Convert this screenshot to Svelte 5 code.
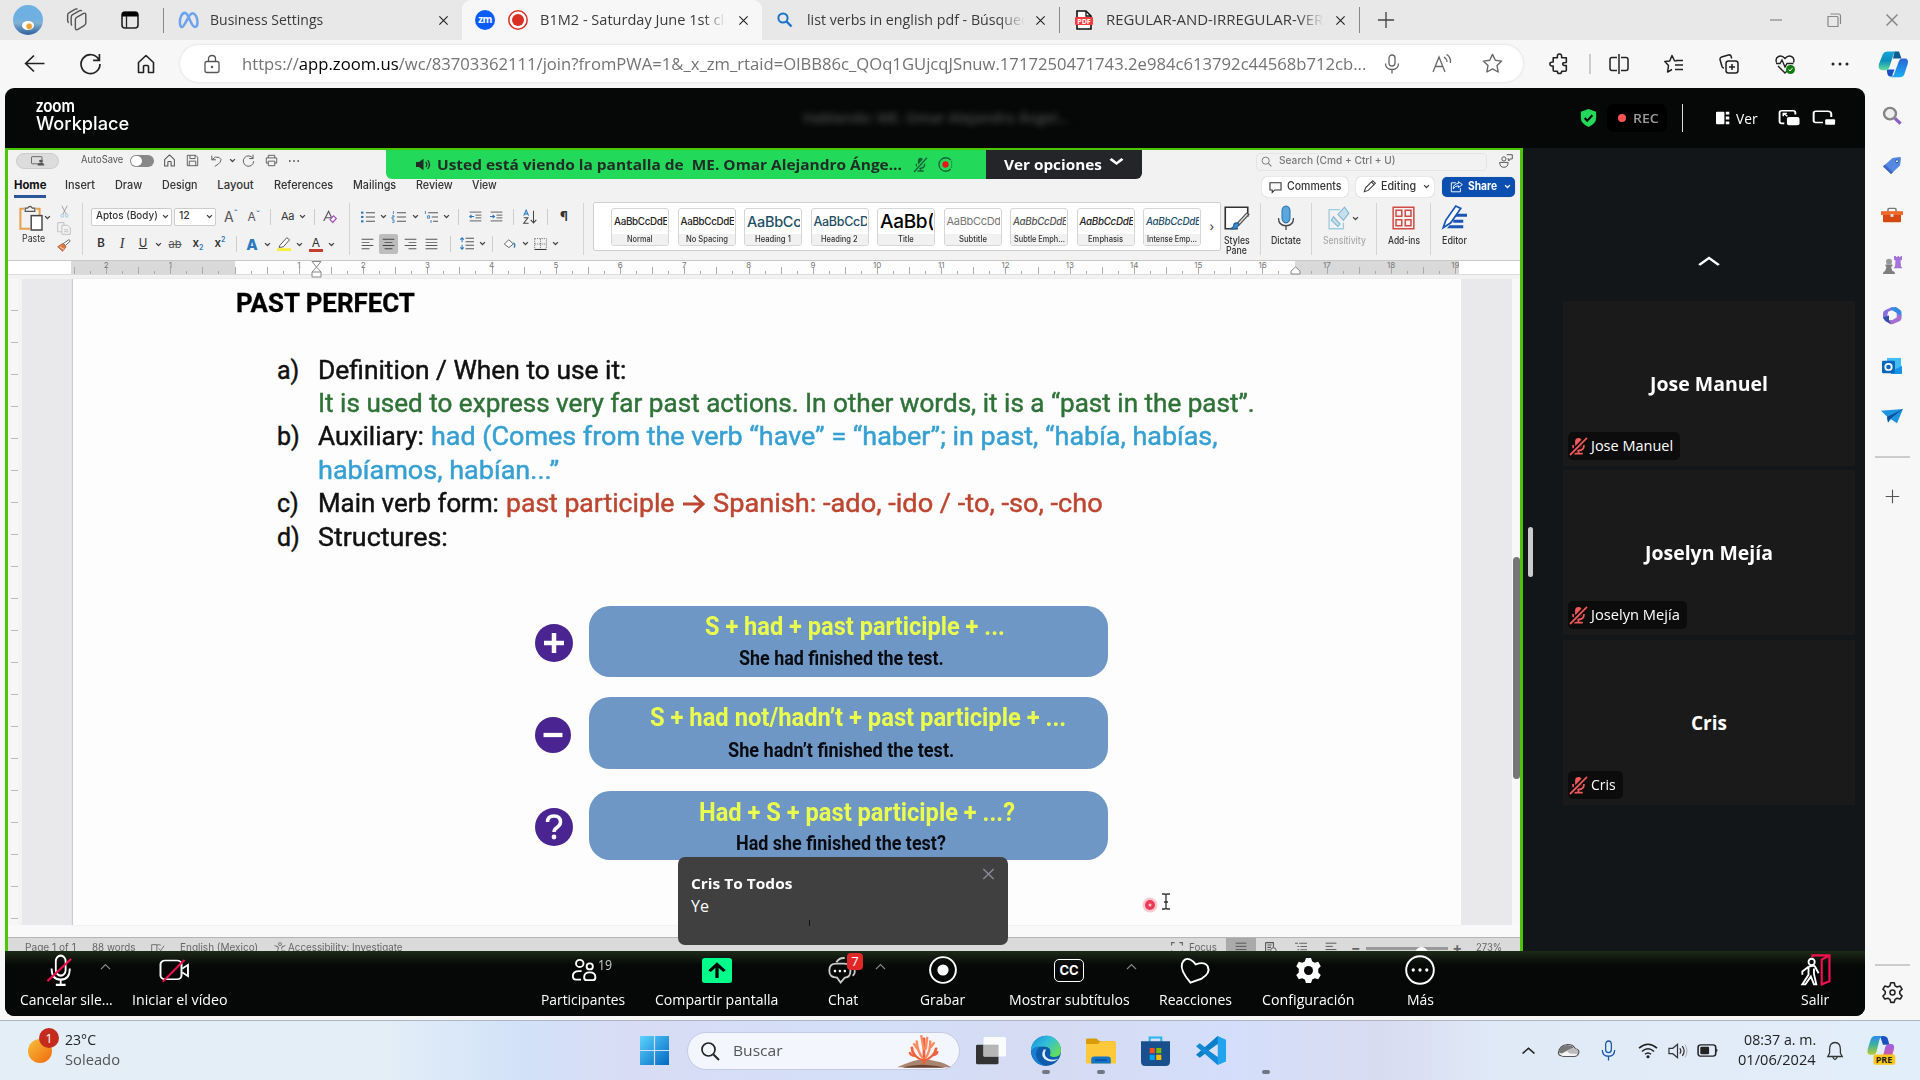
<script>
  // Condenses or expands a label horizontally so that it fills a given width.
  function fit(node, width) {
    const apply = () => {
      const natural = node.offsetWidth;
      if (!natural) return;
      node.style.transform = `scaleX(${width / natural})`;
      node.style.marginRight = `${width - natural}px`;
    };
    apply();
    requestAnimationFrame(apply);
    document.fonts.ready.then(apply);
  }

  const icons = {
    workspaces: '<g fill="none" stroke="#555" stroke-width="1.3" stroke-linejoin="round"><path d="M8.500 9.500q0-1.500 1.500-2.200l6-3.300q2-.8 2 1.200v7.300q0 1.500-1.200 2.300l-6 3.700q-2.300 1-2.300-1.200zM5.500 15q-.8-.5-.8-2V7.500Q4.700 6 6 5.200l6.500-3.700q1-.5 2 .2M2.500 12.500Q1.500 12 1.500 10.500V5.500Q1.500 4 3 3.200L8.500.200q1-.5 2 0"/></g>',
    tabs: '<rect x="2" y="2" width="16" height="16" rx="3" fill="none" stroke="#222" stroke-width="1.6"/><path d="M2 6V4q0-2 2-2h12q2 0 2 2v2.500H2z" fill="#000"/><path d="M6.500 6v12" stroke="#222" stroke-width="1.300"/>',
    meta: '<path d="M2 14C1 9 4 2 7.500 3 11 4 13 17 17 17c3 0 3-6 1.500-10S14 2 11.500 5.500 6 17 4 17q-1.600 0-2-3z" fill="none" stroke="#6ba3ee" stroke-width="2.500"/>',
    x: '<path d="M4.500 4.500l11 11M15.500 4.500l-11 11" stroke="currentColor" stroke-width="1.500" fill="none"/>',
    zm: '<circle cx="10" cy="10" r="10" fill="#0b5cff"/>',
    rec: '<circle cx="10" cy="10" r="9.200" fill="#fff" stroke="#d93025" stroke-width="1.500"/><circle cx="10" cy="10" r="6" fill="#d93025"/>',
    bing: '<circle cx="8" cy="8" r="4.600" fill="none" stroke="#1a73c8" stroke-width="2"/><path d="M11.500 11.500l5 5" stroke="#1a73c8" stroke-width="2.400"/>',
    pdf: '<path d="M3 1h9l5 5v13H3z" fill="#fff" stroke="#111" stroke-width="1.600"/><path d="M12 1v5h5" fill="none" stroke="#111" stroke-width="1.300"/><rect x="1" y="7" width="18" height="8" rx="1" fill="#f53b3b"/>',
    plus: '<path d="M10 1v18M1 10h18" stroke="currentColor" stroke-width="1.500"/>',
    min: '<path d="M4 10h12" stroke="#888" stroke-width="1.200"/>',
    restore: '<path d="M4 6.500h9q1 0 1 1v9H5q-1 0-1-1z" fill="none" stroke="#888" stroke-width="1.200"/><path d="M6.500 4h8q2 0 2 2v8" fill="none" stroke="#888" stroke-width="1.200"/>',
    back: '<path d="M19.500 10H1.500M9.500 1.500L1.500 10l8 8.500" fill="none" stroke="#222" stroke-width="1.600"/>',
    reload: '<path d="M18 6.500A9 9 0 1 0 19 10.500M18.500 1v6h-6" fill="none" stroke="#222" stroke-width="1.600"/>',
    home: '<path d="M2.500 8.500L10 1.500l7.500 7V18.500h-5v-6q0-1-1-1h-3q-1 0-1 1v6h-5z" fill="none" stroke="currentColor" stroke-width="1.600" stroke-linejoin="round"/>',
    lock: '<rect x="3" y="7.500" width="14" height="11" rx="2" fill="none" stroke="#555" stroke-width="1.300"/><path d="M6.500 7.500V5q0-3.500 3.500-3.500T13.500 5v2.500" fill="none" stroke="#555" stroke-width="1.300"/><circle cx="10" cy="13" r="1.200" fill="#555"/>',
    mic: '<rect x="7" y="1" width="6" height="11" rx="3" fill="none" stroke="currentColor" stroke-width="1.300"/><path d="M3.500 9.500q0 6 6.500 6t6.500-6M10 15.500v4" fill="none" stroke="currentColor" stroke-width="1.300"/>',
    read: '<path d="M1 18L7 3l6 15M3.300 12.500h7.400" fill="none" stroke="#666" stroke-width="1.300"/><path d="M12 3q3 2 3 5M14.500.500Q19 3 18.500 9" fill="none" stroke="#666" stroke-width="1.300"/>',
    star: '<path d="M10 1.300l2.700 5.600 6 .8-4.400 4.300 1.100 6.100L10 15.200 4.600 18.100l1.100-6.100L1.300 7.700l6-.8z" fill="none" stroke="#666" stroke-width="1.300" stroke-linejoin="round"/>',
    puzzle: '<path d="M4 4.500h4q-.5-3.500 2-3.500t2 3.500h4.500V9Q13 8.800 13 10.500T16.500 12v4.500q0 .8-1 .8h-3.500q.4 2.200-2 2.200t-2-2.200H5q-1 0-1-1V12.500Q.8 12.500.8 10.500T4 8.500z" fill="none" stroke="#222" stroke-width="1.500" stroke-linejoin="round"/>',
    split: '<path d="M8 3.500H3Q1 3.500 1 5.500v9q0 2 2 2h5M12 3.500h5q2 0 2 2v9q0 2-2 2h-5M10 0v20" fill="none" stroke="#222" stroke-width="1.500"/>',
    fav: '<path d="M12.500 7l-2-.2L8 1.500 5.700 7 .8 7.500l3.700 4L3.600 18 8 15.500M12 6.500h7M11 11h8M11 15.500h8" fill="none" stroke="#222" stroke-width="1.500" stroke-linejoin="round"/>',
    collect: '<rect x="7" y="7" width="12" height="12" rx="2.500" fill="none" stroke="#222" stroke-width="1.500"/><path d="M13 10v6M10 13h6M5 14q-1.500 0-2-1.500L1 5.500Q.8 3.500 2.500 3l7-2q2-.5 2.500 1l.7 2.500" fill="none" stroke="#222" stroke-width="1.500"/>',
    heart: '<path d="M1.500 8.500Q0 4 3.500 2.500 7 1 10 4.500 13 1 16.500 2.500 20 4 18.500 8.500M3 12l7 7 2-2M1 9.500h4l2-3.500 3 7 2-3.500h6.500" fill="none" stroke="#222" stroke-width="1.400"/><circle cx="15.500" cy="15.500" r="4.500" fill="#107c10"/><path d="M13.500 15.500l1.500 1.500 2.500-3" fill="none" stroke="#fff"/>',
    dots: '<g fill="currentColor"><circle cx="3" cy="10" r="1.500"/><circle cx="10" cy="10" r="1.500"/><circle cx="17" cy="10" r="1.500"/></g>',
    copilot: '<defs><linearGradient id="cg1" x2="0" y2="1"><stop stop-color="#16a5d6"/><stop offset=".5" stop-color="#0d8fbf"/><stop offset="1" stop-color="#62dd9a"/></linearGradient><linearGradient id="cg2" x2="0" y2="1"><stop stop-color="#2a63d4"/><stop offset="1" stop-color="#18aef5"/></linearGradient></defs><path d="M9 19q-2.300 0-2.800-2.300L5.800 14H11l-1.500 4q1 1-.5 1z" fill="#1750c4"/><path d="M14 1l1.700 5H10L11 1z" fill="#0c5d92"/><path d="M6 1h7q-2 0-2.600 2L7.700 12q-.7 2.400-3 2.400H3Q-.3 14.400.6 10L3.200 3Q4 1 6 1z" fill="url(#cg1)"/><path d="M14.500 19.500H8q2 0 2.600-2l3-8.500q.7-3 3-3h1.200q2.900 0 2 4l-2.300 7.500q-.8 2-3 2z" fill="url(#cg2)"/>',
    magnify: '<circle cx="8" cy="8" r="6" fill="#eee" stroke="#858585" stroke-width="2.400"/><path d="M13 13l5.500 5.500" stroke="#8a5ccc" stroke-width="3.200"/>',
    tag: '<path d="M10.500 2l7-1q2 0 1.500 2L18 10 9 19 1 11z" fill="#5488e2"/><path d="M1 11l8 8 2-2-8-8z" fill="#3d69c4"/><circle cx="15" cy="5.500" r="1.500" fill="#fff" stroke="#284b94"/>',
    toolbox: '<path d="M6 6V3.500Q6 2.500 7 2.500h6q1 0 1 1V6" fill="none" stroke="#777" stroke-width="1.500"/><rect x="1" y="6" width="18" height="11" rx="1" fill="#d5480f"/><path d="M-1 5.500h22v4H-1z" fill="#ef6a2a"/><rect x="8.500" y="8.500" width="3" height="3" fill="#ddd"/>',
    chess: '<circle cx="7" cy="6" r="3" fill="#999"/><path d="M3.500 9h7v1.500l-1.500 1L10.500 16h1q1.500 0 1.500 3H1q0-3 2-3l1.500-4.500-1-1z" fill="#7e7e7e"/><path d="M12 0h2v1h1.500V0h1.500v1h1.500V0H20v4l-1.500 1 .5 6 1 1v1h-8v-1l1-1 .5-6L12 4z" fill="#a372dc"/>',
    m365: '<path d="M10 1l-7 3.500Q1 5.500 1 8v5l4.500 2V8L14 3.500z" fill="#8670de"/><path d="M9 1.500L14 1l4 3q1.500 1 1.500 3v4L14 8 9 5.500z" fill="#3689e3"/><path d="M19.500 10v3q0 2-2 3L11 19q-1.500.5-3 0l-5-3.500 4.500-.5L14.500 12V8z" fill="#a56fd2"/><path d="M6 6l4-1.500L14.500 7v5L10 15 6 13z" fill="#f7f7f7"/><path d="M1 12l6-2v5l2 4-6-3.500z" fill="#304fa8"/>',
    outlook: '<rect x="5" y="1" width="14" height="12" fill="#40bdf2"/><path d="M19 10L9 15v3h10q1 0 1-1V9z" fill="#1692e3"/><rect x="0" y="4" width="13" height="13" rx="1" fill="#0867bd"/><circle cx="6.500" cy="10.500" r="3.200" fill="none" stroke="#fff" stroke-width="1.800"/>',
    plane: '<path d="M-1 4l22-2-6 15-6-4-3 3-1-6z" fill="#1c94e0"/><path d="M21 2L5 10.500l1 6 2-4z" fill="#0c4f9f"/>',
    cog: '<path d="M8.500 1.500h3l.7 2.700 1.800 1 2.700-.8 1.600 2.700-2 2v2l2 2-1.600 2.600-2.700-.7-1.800 1-.7 2.600h-3l-.7-2.600-1.800-1-2.700.7-1.600-2.600 2-2v-2l-2-2 1.600-2.700 2.700.8 1.800-1z" fill="none" stroke="#222" stroke-width="1.400" stroke-linejoin="round"/><circle cx="10" cy="10" r="2.200" fill="none" stroke="#222" stroke-width="1.300"/>',
    shield: '<path d="M10 0l9 3v7q0 6-9 10Q1 16 1 10V3z" fill="#23d959"/><path d="M5.500 10l3 3 6-6" fill="none" stroke="#000" stroke-width="2.400"/>',
    ver: '<rect x="0" y="1" width="12" height="18" rx="1.500" fill="#fff"/><path d="M14 1h5v4h-5zM14 8h5v4h-5zM14 15h5v4h-5z" fill="#fff"/>',
    pip1: '<path d="M6 16H3.500Q1.500 16 1.500 14V4q0-2 2-2h11q2 0 2 2v2" fill="none" stroke="#fff" stroke-width="1.800"/><rect x="8.500" y="9" width="12" height="9" rx="2" fill="#fff"/><path d="M9 8L5 4.800M5 8V4.800h3.500" fill="none" stroke="#fff" stroke-width="1.400"/>',
    pip2: '<path d="M10 15H3.500Q1.500 15 1.500 13V4.500q0-2 2-2h11q3 0 3 3V9" fill="none" stroke="#fff" stroke-width="1.800"/><rect x="12" y="11.500" width="9" height="6" rx="1" fill="#fff"/>',
    up: '<path d="M3 14l7-7 7 7" fill="none" stroke="currentColor" stroke-width="2"/>',
    down: '<path d="M3 6l7 7 7-7" fill="none" stroke="currentColor" stroke-width="3.500"/>',
    speaker: '<path d="M0 6h4l6-5v18l-6-5H0z" fill="#222b26"/><path d="M13 6q3 4 0 8M15.500 3q5 7 0 14" fill="none" stroke="#222b26" stroke-width="1.600"/>',
    micOff: '<rect x="6" y="1" width="8" height="11" rx="4" fill="currentColor"/><path d="M3.500 9q0 6 6.500 6t6.500-6M10 15v3M5 18.500h10" fill="none" stroke="currentColor" stroke-width="2"/><path d="M1 19L19 1" stroke="var(--cut)" stroke-width="5"/><path d="M0 20L20 1" stroke="currentColor" stroke-width="2"/>',
    recDot: '<path d="M17 4A9 9 0 1 0 17 16" fill="none" stroke="#16613a" stroke-width="1.700"/><path d="M18.200 5.500v9" stroke="#16613a" stroke-width="1.200" stroke-dasharray="2 1.500"/><circle cx="10" cy="10" r="4.200" fill="#ee1212"/>',
    present: '<rect x="2" y="3" width="14" height="13" rx="1" fill="none" stroke="#555" stroke-width="1.300"/><circle cx="14.500" cy="11" r="2.500" fill="#555"/><path d="M10 19q0-5 4.500-5t4.500 5z" fill="#555"/>',
    save: '<path d="M2 2h13l3 3v13H2zM6 2v5h8V2M5 18v-7h10v7" fill="none" stroke="#555" stroke-width="1.400"/>',
    undo: '<path d="M3 1v7h7M3 8Q9 1 15 4t2 8q-2 3-9 7" fill="none" stroke="#555" stroke-width="1.500"/>',
    redo: '<path d="M17 1v6h-6M17 7A8 8 0 1 0 18 11" fill="none" stroke="#555" stroke-width="1.400"/>',
    print: '<path d="M5 6V2h10v4M5 14H2V6h16v8h-3M5 11h10v7H5z" fill="none" stroke="#555" stroke-width="1.400"/>',
    search: '<circle cx="8.500" cy="8.500" r="6.500" fill="none" stroke="currentColor" stroke-width="1.700"/><path d="M13.500 13.500L19 19" stroke="currentColor" stroke-width="2"/>',
    people: '<circle cx="7" cy="7" r="3" fill="none" stroke="#555" stroke-width="1.400"/><path d="M1 12h12q0 7-6 7t-6-7zM11 1h8v6h-3l-2 3V7h-2" fill="none" stroke="#555" stroke-width="1.400"/>',
    comment: '<path d="M1.500 3h17v12H9l-4 4v-4H1.500z" fill="none" stroke="#333" stroke-width="1.700"/>',
    pencil: '<path d="M2 18l2-6L15 1l4 4L8 16z M13 3l4 4" fill="none" stroke="#333" stroke-width="1.600"/>',
    share: '<path d="M9 3H2v15h14v-6M13 1l6 5-6 5V8Q8 8 5 13q0-8 8-9z" fill="none" stroke="#fff" stroke-width="1.500"/>',
    paste: '<path d="M15 3h3v5M5 3H2v16h8" fill="none" stroke="#e8a04c" stroke-width="1.700"/><path d="M6 4V2.500h2q2-3 4 0h2V5H6z" fill="#f2f2f2" stroke="#555"/><rect x="11" y="8.500" width="9" height="11.500" fill="#fff" stroke="#444" stroke-width="1.200"/>',
    cut: '<path d="M5 1l8 13M15 1L7 14" stroke="#888" stroke-width="1.200"/><circle cx="6" cy="16.500" r="2.500" fill="none" stroke="#8fc1dc" stroke-width="1.300"/><circle cx="14" cy="16.500" r="2.500" fill="none" stroke="#8fc1dc" stroke-width="1.300"/>',
    copy: '<path d="M7 15H1V1h9v4M7 5h8l4 4v10H7zM10 12h6M10 15h6" fill="none" stroke="#bbb" stroke-width="1.300"/>',
    brush: '<path d="M17 1l2 2-7 7-3-3z" fill="#fff" stroke="#555" stroke-width="1.300"/><path d="M8 7l5 5-5 7-7-7z" fill="#e07b45" stroke="#a65129"/><path d="M4 12l6 4" stroke="#fff"/>',
    eraser: '<path d="M1 17L8 2l6 14M3.500 12h8" fill="none" stroke="#555" stroke-width="1.700"/><path d="M10 15l5-6 4 4-5 6z" fill="#fff" stroke="#a04eb5" stroke-width="1.800"/>',
    bullets: '<g fill="#2a79bd"><rect x="0" y="1" width="3.500" height="3.500"/><rect x="0" y="8.200" width="3.500" height="3.500"/><rect x="0" y="15.500" width="3.500" height="3.500"/></g><path d="M7 3h13M7 10h13M7 17h13" stroke="#555" stroke-width="1.500"/>',
    numbers: '<path d="M2 0v5M0 8h3v2H0v3h3M0 15h3v4H0" fill="none" stroke="#2a79bd" stroke-width="1.200"/><path d="M7 3h13M7 10h13M7 17h13" stroke="#555" stroke-width="1.500"/>',
    levels: '<path d="M2 0v5M5 8h3v4H5zM10 15v5" fill="none" stroke="#2a79bd" stroke-width="1.300"/><path d="M6 3h14M11 10h9M13 17h7" stroke="#555" stroke-width="1.500"/>',
    outdent: '<path d="M1 2h18M10 7.500h9M10 12.500h9M1 18h18" stroke="#555" stroke-width="1.500"/><path d="M8 10H1M4 7l-3 3 3 3" fill="none" stroke="#2a79bd" stroke-width="1.700"/>',
    indent: '<path d="M1 2h18M10 7.500h9M10 12.500h9M1 18h18" stroke="#555" stroke-width="1.500"/><path d="M0 10h7M4 7l3 3-3 3" fill="none" stroke="#2a79bd" stroke-width="1.700"/>',
    sort: '<path d="M1 8l3.500-8L8 8M2 5.500h5" fill="none" stroke="#2a79bd" stroke-width="1.500"/><path d="M1 11h6l-6 8h7M15 1v17M11 14l4 4.500 4-4.500" fill="none" stroke="#444" stroke-width="1.500"/>',
    left: '<path d="M1 2h18M1 7.300h12M1 12.600h18M1 18h12" stroke="#555" stroke-width="1.600"/>',
    center: '<path d="M1 2h18M4 7.300h12M1 12.600h18M4 18h12" stroke="#444" stroke-width="1.600"/>',
    right: '<path d="M1 2h18M7 7.300h12M1 12.600h18M7 18h12" stroke="#555" stroke-width="1.600"/>',
    just: '<path d="M1 2h18M1 7.300h18M1 12.600h18M1 18h18" stroke="#555" stroke-width="1.600"/>',
    web: '<path d="M1 1h13v8M1 1v17h8M4 5h7M4 9h6M4 13h4" fill="none" stroke="#555" stroke-width="1.800"/><circle cx="14" cy="14" r="4.500" fill="none" stroke="#555" stroke-width="1.600"/>',
    outl: '<path d="M0 2h5M7 2h13M4 7.500h3M9 7.500h11M4 13h3M9 13h11M7 18h13" stroke="#666" stroke-width="1.800"/>',
    spacing: '<path d="M8 2h12M8 7.300h12M8 12.600h12M8 18h12" stroke="#555" stroke-width="1.500"/><path d="M3 1v7M3 12v7M.5 4L3 1l2.500 3M.5 16L3 19l2.500-3" fill="none" stroke="#2a79bd" stroke-width="1.500"/>',
    bucket: '<path d="M9 3l7 7-7 6-7-6z" fill="#fff" stroke="#555" stroke-width="1.400"/><path d="M16 8q4 3 1 8" stroke="#2a79bd" stroke-width="2" fill="none"/>',
    borders: '<path d="M1 1h18v18H1zM10 1v18M1 10h18" fill="none" stroke="#666" stroke-width="1.300" stroke-dasharray="2 1.500"/><path d="M1 19h18" stroke="#333" stroke-width="1.600"/>',
    marker: '<path d="M4 12L14 1l4 3-9 10-6 1z" fill="#fff" stroke="#555" stroke-width="1.400"/><path d="M0 16h20v4H0z" fill="#f7ee35"/>',
    stylesPane: '<path d="M11 19H1V1h18v8" fill="#fff" stroke="#333" stroke-width="1.300"/><path d="M20 7l-8 9-2-1 8-9z" fill="#ddd" stroke="#555"/><path d="M12 15q-1 5-7 4 3-1 3-4 2-2 4 0z" fill="#3e8bc9" stroke="#205f99"/>',
    dictate: '<rect x="6" y="0" width="8" height="14" rx="4" fill="#5aa7de" stroke="#2670ab"/><path d="M2.500 10q0 6.500 7.500 6.500t7.500-6.500M10 16.500V20" fill="none" stroke="#444" stroke-width="1.300"/>',
    sens: '<path d="M11 3H1v16h13v-5" fill="none" stroke="#9fcbe0" stroke-width="1.200"/><path d="M3 12l6 5 2-2-6-6zM9 7l5 5 5-6-4-5-3 3z" fill="#c5dfed" stroke="#84b9d4"/>',
    addins: '<path d="M1 1h18v18H1z M3.500 3.500h5v5h-5z M11.500 3.500h5v5h-5z M3.500 11.500h5v5h-5z M11.500 11.500h5v5h-5z" fill="none" stroke="#cf4a44" stroke-width="1.300"/>',
    editor: '<path d="M11 6.500h9V9h-9zM9 11.500h8V14H9zM6 16h11v2.500H4z" fill="#1a56b5"/><path d="M1 18l2-6L11 0l4 2-8 12z" fill="#fff" stroke="#1a56b5" stroke-width="1.400"/>',
    book: '<path d="M1 3h8v15H1zM9 4q4-2 6 0M9 18h6M12 10l3 4 5-9" fill="none" stroke="#666" stroke-width="1.500"/>',
    access: '<circle cx="10" cy="3.500" r="2.500" fill="none" stroke="#666" stroke-width="1.400"/><path d="M1 6l6 2v4L4 19M19 6l-6 2v4M12 15h7M12 19h7" fill="none" stroke="#666" stroke-width="1.600"/>',
    focus: '<path d="M1 6V1h5M14 1h5v5M1 14v5h5M14 19h5v-5" fill="none" stroke="#666" stroke-width="2"/>',
    zMic: '<rect x="7" y="1" width="7" height="12.500" rx="3.500" fill="none" stroke="#fff" stroke-width="1.300"/><path d="M4 9q0 7 6.500 7T17 9M10.500 16v3.300M7 19.300h7" fill="none" stroke="#fff" stroke-width="1.300"/><path d="M1 17L18 3" stroke="#f4104f" stroke-width="1.400"/>',
    zVid: '<rect x="1" y="2" width="14" height="15" rx="3" fill="none" stroke="#fff" stroke-width="1.300"/><path d="M15.500 8.500L19.300 5.500v9l-3.800-3" fill="none" stroke="#fff" stroke-width="1.300"/><path d="M2.500 19L17 1.500" stroke="#f4104f" stroke-width="1.500"/>',
    zPart: '<circle cx="7" cy="4.500" r="3" fill="none" stroke="#fff" stroke-width="1.500"/><circle cx="15" cy="7" r="2.500" fill="none" stroke="#fff" stroke-width="1.500"/><path d="M8 18H4q-2.500 0-2.500-3 0-4 5-4h2M15 12q4.500 0 4.500 4 0 2.500-2 2.500h-5q-2 0-2-2.500 0-4 4.500-4z" fill="none" stroke="#fff" stroke-width="1.500"/>',
    zShare: '<rect width="20" height="20" rx="2" fill="#00ff8a"/><path d="M10 16V6M5 10.500L10 5l5 5.500" fill="none" stroke="#000" stroke-width="2.200"/>',
    zChat: '<path d="M6 4.500Q8 1 12 1.500M19 10q.5 3-1.500 4" fill="none" stroke="#ccc" stroke-width="1.300"/><path d="M6 5.500h5.500q4.500 0 4.500 4.500v1q0 4-4 4.500l-3 3.500-2.500-3.500Q1 15 1 11v-1q0-4.500 5-4.500z" fill="none" stroke="#ccc" stroke-width="1.300"/><g fill="#fff"><circle cx="5" cy="10.800" r=".9"/><circle cx="8.500" cy="10.800" r=".9"/><circle cx="12" cy="10.800" r=".9"/></g>',
    zRec: '<circle cx="10" cy="10" r="9.200" fill="none" stroke="#fff" stroke-width="1.400"/><circle cx="10" cy="10" r="4" fill="#fff"/>',
    zHeart: '<path d="M7 19Q0 10 1.300 5 3 0 7 2q2 1 3.500 3.500 6-2.500 8 1.500 2 5-4 9z" fill="none" stroke="#fff" stroke-width="1.300"/>',
    zGear: '<path d="M8 0h4l1 2.800 2 1 2.800-.8 2 3.500-2 2v3l2 2-2 3.500-2.800-.8-2 1L12 20H8l-1-2.800-2-1-2.800.8-2-3.500 2-2v-3l-2-2L2.200 3 5 3.800l2-1z" fill="#fff"/><circle cx="10" cy="10" r="3.600" fill="#060808"/>',
    zMore: '<circle cx="10" cy="10" r="9.200" fill="none" stroke="#fff" stroke-width="1.300"/><g fill="#fff"><circle cx="5.500" cy="10" r="1.100"/><circle cx="10" cy="10" r="1.100"/><circle cx="14.500" cy="10" r="1.100"/></g>',
    zExit: '<path d="M8 2V.8h11V17l-5 2V3.500L19 1" fill="none" stroke="#f4104f" stroke-width="1.400"/><circle cx="7.500" cy="5" r="2" fill="none" stroke="#fff" stroke-width="1.200"/><path d="M5.500 8q4-1.500 4.500.5l2 3.500M5.500 8L1.500 11v2M5.500 8v5L1.500 19h2l3.500-5 2 5h1.500L9 12.500V9" fill="none" stroke="#fff" stroke-width="1.200"/>',
    start: '<defs><linearGradient id="wg" x2="1" y2="1"><stop stop-color="#5cd3ff"/><stop offset="1" stop-color="#0067c0"/></linearGradient></defs><path d="M0 0h9.600v9.600H0zM10.400 0H20v9.600h-9.600zM0 10.400h9.600V20H0zM10.400 10.400H20V20h-9.600z" fill="url(#wg)"/>',
    coral: '<path d="M0 19q3-2 6-3.500 4-1.500 8 0 4 1 6 3.500z" fill="#a98570"/><path d="M2 19.300q5-2 9-1.500t7 1.500z" fill="#6b4232"/><g fill="none" stroke-linecap="round"><path d="M10 17V3M10 15.500Q5.500 13 5.500 8M10 15.500q4-2.500 4.500-7M7 13Q5 12.500 4.800 11M13.300 12.500q1.400-.5 1.600-2" stroke="#f2603c" stroke-width="1"/><path d="M9.500 14Q7.500 10 7.300 4.500M10.500 14q2-4 1.800-9.500M9.900 9L9 1.500M10.600 9l.6-6.500M7.400 8.500L6.300 6M12.500 8l1.200-2.500" stroke="#ff8a5e" stroke-width=".9"/></g>',
    task: '<rect x="0" y="5.500" width="15" height="14" rx="1" fill="#333"/><rect x="5" y="0" width="15" height="14" rx="1" fill="#fff" opacity=".88"/><path d="M5 5.500h10V14H5z" fill="#b6b6b6"/>',
    edge: '<defs><linearGradient id="eg" x2="1" y2=".7"><stop stop-color="#178cd8"/><stop offset=".5" stop-color="#31bedb"/><stop offset="1" stop-color="#66dc5a"/></linearGradient></defs><circle cx="10" cy="10" r="10" fill="#0d5bab"/><path d="M0 10A10 10 0 0 1 20 9.500Q20 14 15.500 14q-4 0-2.500-2.500.5-4.500-4.500-4.500Q3 7 0 10z" fill="url(#eg)"/><path d="M0 10Q2 6.500 6 7q-4 3-2 8 2 4 6 5Q1 19 0 10z" fill="#1680d0"/><path d="M8.500 9q-3 5 2.500 7.500 4 1.500 7.500-1.500-6 2-8.500-1-1.500-2 0-5z" fill="#e5edfb"/>',
    folder: '<path d="M0 2q0-1 1-1h6l2 2h10v5H0z" fill="#d99b06"/><path d="M0 5h8l2-2h9q1 0 1 1v15H0z" fill="#fdc93b"/><path d="M3.500 19v-3q0-2 2-2h9q2 0 2 2v3z" fill="#1173c9"/><path d="M6 16.500h8" stroke="#0a4f92" stroke-width="1"/>',
    store: '<path d="M6 4V1h8v3" fill="none" stroke="#25b6ee" stroke-width="1.400"/><path d="M0 3.500h20V17q0 3-3 3H3q-3 0-3-3z" fill="#17508c"/><path d="M6 8h3.500v3.500H6z" fill="#f25022"/><path d="M10.500 8H14v3.500h-3.500z" fill="#7fba00"/><path d="M6 12.500h3.500V16H6z" fill="#00a4ef"/><path d="M10.500 12.500H14V16h-3.500z" fill="#ffb900"/>',
    code: '<path d="M14.500 0L20 2.500v15L14.500 20 4 10z" fill="#22a3ee"/><path d="M14.500 0v5.500L2.500 15 0 13z" fill="#0a7fc9"/><path d="M14.500 20v-5.500L2.500 5 0 7z" fill="#1489d6"/><path d="M14.500 5.500v9L8.500 10z" fill="#dbe0f5"/>',
    cloud: '<path d="M3 17q-3-1-2.500-5Q2 3 9 2q5-.5 7.500 5.500Q21 9 19.500 14q-1 4-4 4H6q-2 0-3-1z" fill="#f5f5f5" stroke="#555" stroke-width="1.200"/><path d="M1 13Q1.500 3 9 2.500q4 0 6 3.500L3.500 14z" fill="#777"/><path d="M15 6l-7 4 3 4 8 .5Q20 9 16.500 8z" fill="#bbb"/>',
    wifi: '<path d="M1 7.500q9-8 18 0M4 11q6-5.500 12 0M7 14q3-2.700 6 0" fill="none" stroke="#222" stroke-width="1.500"/><circle cx="10" cy="16.500" r="1.600" fill="#222"/>',
    vol: '<path d="M1 7h4l5-4.500v15L5 13H1z" fill="none" stroke="#333" stroke-width="1.300"/><path d="M12.500 7q2 3 0 6M15 4.500q4 5.500 0 11" fill="none" stroke="#333" stroke-width="1.300"/><path d="M18 3q4 7 0 14" fill="none" stroke="#aaa"/>',
    batt: '<rect x="1" y="4" width="16" height="12" rx="2.500" fill="none" stroke="#222" stroke-width="1.400"/><rect x="3" y="6" width="8" height="8" rx="1" fill="#222"/><path d="M17.500 8q2.500 2 0 4z" fill="#222"/>',
    bell: '<path d="M10 1.500q6 0 6 7v3.500l2 3.500H2L4 12V8.500q0-7 6-7zM7.500 16q2.500 5 5 0" fill="none" stroke="#333" stroke-width="1.400"/>',
    copilotPre: '<defs><linearGradient id="pg1" x2="0" y2="1"><stop stop-color="#2a8af0"/><stop offset=".45" stop-color="#3bb0a0"/><stop offset="1" stop-color="#b8cc2c"/></linearGradient><linearGradient id="pg2" x2="0" y2="1"><stop stop-color="#9a5fe6"/><stop offset="1" stop-color="#f55a7a"/></linearGradient></defs><path d="M11 0q3 0 3.500 2.500L15.500 6H11L9 0z" fill="#1b50c0"/><path d="M5.500 0H11Q9 .5 8.500 3L6.500 11q-.7 2-3 2H2.500Q-.3 13 .5 9L2.500 2.500Q3.500 0 5.500 0z" fill="url(#pg1)"/><path d="M13.500 18H8q2 0 2.500-2l2-8q.7-2.500 3-2.500h1q3 0 2 4l-2 6.500q-.8 2-3 2z" fill="url(#pg2)"/><rect x="4.500" y="12.800" width="15" height="7" rx="1.500" fill="#ffc61a"/>'
  };

  const tabs = [
    { id: 't1', icon: 'meta', text: 'Business Settings', w: 113 },
    { id: 't2', icon: 'zm', text: 'B1M2 - Saturday June 1st cla', w: 192, active: true },
    { id: 't3', icon: 'bing', text: 'list verbs in english pdf - Búsqued', w: 223 },
    { id: 't4', icon: 'pdf', text: 'REGULAR-AND-IRREGULAR-VERB', w: 227 }
  ];
  const wordTabs = [
    ['Home', 32], ['Insert', 30], ['Draw', 27], ['Design', 36], ['Layout', 36], ['References', 59], ['Mailings', 43], ['Review', 37], ['View', 25]
  ];
  const styles = [
    ['Normal', 25, 'AaBbCcDdE', 'n'], ['No Spacing', 42, 'AaBbCcDdE', 'n'], ['Heading 1', 36, 'AaBbCc', 's1'],
    ['Heading 2', 37, 'AaBbCcD', 's2'], ['Title', 16, 'AaBb(', 'tt'], ['Subtitle', 28, 'AaBbCcDd', 'st'],
    ['Subtle Emph...', 51, 'AaBbCcDdE', 'se'], ['Emphasis', 35, 'AaBbCcDdE', 'em'], ['Intense Emp...', 50, 'AaBbCcDdE', 'ie']
  ];
  const rulerNumbers = Array.from({ length: 22 }, (_, i) => Math.abs(i - 2) || '');
  const structures = [
    { sign: '+', rule: 'S + had + past participle + ...', rw: 300, shift: 'a', ex: 'She had finished the test.', ew: 205 },
    { sign: '−', rule: 'S + had not/hadn’t + past participle + ...', rw: 416, shift: 'b', ex: 'She hadn’t finished the test.', ew: 226 },
    { sign: '?', rule: 'Had + S + past participle + ...?', rw: 316, shift: 'c', ex: 'Had she finished the test?', ew: 210 }
  ];
  const people = [
    { name: 'Jose Manuel', big: 118, small: 82 },
    { name: 'Joselyn Mejía', big: 128, small: 89 },
    { name: 'Cris', big: 36, small: 25 }
  ];
  const sidebar = ['magnify', 'tag', 'toolbox', 'chess', 'm365', 'outlook', 'plane'];
</script>

{#snippet ic(name, w = 20, h = w)}
  <svg class="ic" width={w} height={h} viewBox="0 0 20 20" preserveAspectRatio="none">{@html icons[name]}</svg>
{/snippet}

{#snippet t(text, w)}<span class="fit" use:fit={w}>{text}</span>{/snippet}

{#snippet chev()}<span class="chev">{@render ic('down', 7)}</span>{/snippet}

<div class="screen">
  <header class="tabstrip">
    <span class="avatar"><i></i></span>
    <span class="cell">{@render ic('workspaces', 22)}</span>
    <span class="cell">{@render ic('tabs', 20)}</span>
    <span class="bar"></span>
    {#each tabs as tab (tab.id)}
      <div class="tab {tab.id}" class:active={tab.active}>
        <span class="fav">{@render ic(tab.icon, 20)}{#if tab.icon === 'zm'}<b>zm</b>{/if}{#if tab.icon === 'pdf'}<b class="p">PDF</b>{/if}</span>
        {#if tab.active}<span class="recicon">{@render ic('rec', 20)}</span>{/if}
        <span class="ttl" class:fade={tab.id !== 't1'}>{@render t(tab.text, tab.w)}</span>
        <span class="cls">{@render ic('x', 15)}</span>
      </div>
    {/each}
    <span class="newtab">{@render ic('plus', 18)}</span>
    <div class="winctl">{@render ic('min', 20)}{@render ic('restore', 20)}<span class="wx">{@render ic('x', 20)}</span></div>
  </header>

  <div class="toolbar">
    <span class="cell">{@render ic('back', 21, 19)}</span>
    <span class="cell">{@render ic('reload', 21)}</span>
    <span class="cell dark">{@render ic('home', 20)}</span>
    <div class="address">
      {@render ic('lock', 20)}
      <span class="url fit" use:fit={1124}>https://<b>app.zoom.us</b>/wc/83703362111/join?fromPWA=1&_x_zm_rtaid=OlBB86c_QOq1GUjcqJSnuw.1717250471743.2e984c613792c44568b712cb...</span>
      <span class="aicons"><span>{@render ic('mic', 20)}</span><span>{@render ic('read', 20)}</span><span>{@render ic('star', 21)}</span></span>
    </div>
    <span class="cell c1">{@render ic('puzzle', 21)}</span>
    <span class="vb"></span>
    <div class="right">
      {#each ['split', 'fav', 'collect', 'heart', 'dots'] as n}<span class="cell">{@render ic(n, 20)}</span>{/each}
    </div>
    <span class="cop">{@render ic('copilot', 30, 28)}</span>
  </div>

  <div class="body">
    <div class="zoom">
      <div class="zhead">
        <div class="logo"><span class="z1">{@render t('zoom', 39)}</span><span class="z2">{@render t('Workplace', 93)}</span></div>
        <div class="ghost">{@render t('Hablando: ME. Omar Alejandro Ángel...', 266)}</div>
        <div class="zright">
          <span class="sh">{@render ic('shield', 17, 18)}</span>
          <span class="recpill"><i></i>{@render t('REC', 26)}</span>
          <span class="zbar"></span>
          <span class="ver">{@render ic('ver', 14, 14)}{@render t('Ver', 22)}</span>
          {@render ic('pip1', 21, 18)}
          {@render ic('pip2', 22, 18)}
        </div>
      </div>

      <div class="zmain">
        <div class="share">
          <div class="banner">
            <div class="ban1">{@render ic('speaker', 15, 13)}{@render t('Usted está viendo la pantalla de  ME. Omar Alejandro Ánge...', 465)}<span class="bm">{@render ic('micOff', 13, 15)}</span>{@render ic('recDot', 15)}</div>
            <div class="ban2">{@render t('Ver opciones', 98)}<span class="bd">{@render ic('down', 17, 13)}</span></div>
          </div>

          <div class="wtitle">
            <span class="pill">{@render ic('present', 15, 11)}</span>
            <span class="auto">{@render t('AutoSave', 42)}</span>
            <span class="toggle"><i></i></span>
            <span class="quick"><span class="q">{@render ic('home', 13)}</span><span class="q">{@render ic('save', 13)}</span><span class="q">{@render ic('undo', 12)}</span></span>
            <span class="q qc">{@render chev()}</span>
            <span class="q q2">{@render ic('redo', 13)}</span><span class="q q2">{@render ic('print', 13)}</span><span class="q q2">{@render ic('dots', 12)}</span>
            <span class="wsearch">{@render ic('search', 11)}{@render t('Search (Cmd + Ctrl + U)', 116)}</span>
            <span class="ppl">{@render ic('people', 14)}</span>
          </div>

          <div class="wmenu">
            {#each wordTabs as [name, w], i}<span class="wm" class:on={i === 0}>{@render t(name, w)}</span>{/each}
            <div class="wbtns">
              <span class="wb">{@render ic('comment', 13, 12)}{@render t('Comments', 54)}</span>
              <span class="wb ed">{@render ic('pencil', 13, 13)}{@render t('Editing', 35)}{@render chev()}</span>
              <span class="wb sharebtn">{@render ic('share', 13, 12)}{@render t('Share', 29)}{@render chev()}</span>
            </div>
          </div>

          <div class="ribbon">
            <div class="grp clip">
              <div class="pasteb">
                <span class="pi">{@render ic('paste', 24, 25)}{@render chev()}</span>
                {@render t('Paste', 23)}
              </div>
              <div class="clipcol">{@render ic('cut', 11, 13)}{@render ic('copy', 14, 13)}{@render ic('brush', 14, 13)}</div>
            </div>

            <div class="grp font">
              <div class="fr1">
                <span class="box">{@render t('Aptos (Body)', 62)}{@render chev()}</span>
                <span class="box">{@render t('12', 11)}{@render chev()}</span>
                <span class="big">A<sup>ˆ</sup></span>
                <span class="big sm">A<sup>ˇ</sup></span>
                <i class="sep"></i>
                <span class="aa">Aa {@render chev()}</span>
                <i class="sep"></i>
                <span>{@render ic('eraser', 14, 13)}</span>
              </div>
              <div class="fr2">
                <b>B</b><em>I</em><u>U</u>{@render chev()}<s>ab</s><b>x<sub>2</sub></b><b>x<sup>2</sup></b><i class="sep"></i>
                <span class="pair"><span class="outl">A</span>{@render chev()}</span>
                <span class="pair"><span>{@render ic('marker', 14, 14)}</span>{@render chev()}</span>
                <span class="pair"><span class="red">A</span>{@render chev()}</span>
              </div>
            </div>

            <div class="grp para">
              <div class="pr1">
                {#each ['bullets', 'numbers', 'levels'] as n}<span class="pair"><span>{@render ic(n, 14, 12)}</span>{@render chev()}</span>{/each}
                <i class="sep"></i><span class="w21">{@render ic('outdent', 13, 11)}</span><span class="w21">{@render ic('indent', 13, 11)}</span>
                <i class="sep s3"></i><span class="w21">{@render ic('sort', 14, 14)}</span><i class="sep s3"></i><span class="w21 pil">¶</span>
              </div>
              <div class="pr2">
                <span class="al">{@render ic('left', 13, 12)}</span><span class="al on">{@render ic('center', 13, 12)}</span><span class="al">{@render ic('right', 13, 12)}</span><span class="al">{@render ic('just', 13, 12)}</span>
                <i class="sep"></i>
                <span class="pair"><span>{@render ic('spacing', 14, 13)}</span>{@render chev()}</span>
                <i class="sep s2"></i>
                <span class="pair"><span>{@render ic('bucket', 13, 12)}</span>{@render chev()}</span>
                <span class="pair"><span>{@render ic('borders', 13, 12)}</span>{@render chev()}</span>
              </div>
            </div>

            <div class="gallery">
              {#each styles as [name, w, sample, k]}
                <div class="card"><span class="sample {k}">{sample}</span><span class="cap">{@render t(name, w)}</span></div>
              {/each}
              <span class="more">›</span>
            </div>

            <div class="bigb b1"><span>{@render ic('stylesPane', 25, 24)}</span>{@render t('Styles', 26)}{@render t('Pane', 21)}</div>
            <div class="bigb b2"><span>{@render ic('dictate', 20, 24)}</span>{@render t('Dictate', 30)}</div>
            <div class="bigb b3"><span>{@render ic('sens', 22, 24)}{@render chev()}</span>{@render t('Sensitivity', 43)}</div>
            <div class="bigb b4"><span>{@render ic('addins', 23, 24)}</span>{@render t('Add-ins', 32)}</div>
            <div class="bigb b5"><span>{@render ic('editor', 25, 24)}</span>{@render t('Editor', 25)}</div>
          </div>

          <div class="ruler">
            <span class="corner">↵</span>
            <div class="track">
              <div class="nums">{#each rulerNumbers as n}<span>{n}</span>{/each}</div>
              <svg class="mk m1" width="11" height="17" viewBox="0 0 11 17"><path d="M1 .5h9L5.500 6zM5.500 6L10 11v5H1v-5zM1 11h9" fill="#fff" stroke="#888" /></svg>
              <svg class="mk m2" width="11" height="9" viewBox="0 0 11 9"><path d="M5.500 1L10 5v3H1V5z" fill="#fff" stroke="#888" /></svg>
            </div>
          </div>

          <div class="canvas">
            <div class="vruler"></div>
            <div class="page">
              <h1>{@render t('PAST PERFECT', 179)}</h1>
              <div class="list">
                <span>a)</span><p>{@render t('Definition / When to use it:', 309)}</p>
                <span></span><p class="green">{@render t('It is used to express very far past actions. In other words, it is a “past in the past”.', 937)}</p>
                <span>b)</span><p>{@render t('Auxiliary:', 106)}<i></i><em class="blue">{@render t('had (Comes from the verb “have” = “haber”; in past, “había, habías,', 786)}</em></p>
                <span></span><p class="blue">{@render t('habíamos, habían...”', 241)}</p>
                <span>c)</span><p>{@render t('Main verb form:', 181)}<i></i><em class="rust">{@render t('past participle', 168)}<svg class="arrow" width="24" height="20" viewBox="0 0 24 20"><path d="M1 10h20M12 1.500l9 8.500-9 8.500" fill="none" stroke="#bd4630" stroke-width="3" /></svg>{@render t('Spanish: -ado, -ido / -to, -so, -cho', 390)}</em></p>
                <span>d)</span><p>{@render t('Structures:', 130)}</p>
              </div>
              <div class="diagram">
                {#each structures as s}
                  <div class="srow {s.shift}">
                    <span class="sign">
                      <svg width="38" height="38" viewBox="0 0 38 38"><circle cx="19" cy="19" r="19" fill="#4a2592" />
                        {#if s.sign === '+'}<path d="M19 9v20M9 19h20" stroke="#fff" stroke-width="4.500" />
                        {:else if s.sign === '−'}<path d="M9 19h20" stroke="#fff" stroke-width="4.500" />
                        {:else}<path d="M12.500 14q0-6 6.500-6t6.500 6q0 3-3.500 5.500-3 2-3 4.500" fill="none" stroke="#fff" stroke-width="3.500" /><circle cx="19" cy="29" r="2.400" fill="#fff" />{/if}
                      </svg>
                    </span>
                    <div class="sbox"><div class="rule">{@render t(s.rule, s.rw)}</div><div class="ex">{@render t(s.ex, s.ew)}</div></div>
                  </div>
                {/each}
              </div>
            </div>
            <div class="scroll"><i></i></div>
            <svg class="laser" width="34" height="22" viewBox="0 0 34 22"><circle cx="8" cy="14" r="7.500" fill="#f88a9a" opacity=".45" /><circle cx="8" cy="14" r="5" fill="#ee3a55" /><circle cx="8" cy="14" r="1.500" fill="#ffc3cb" /><path d="M20 3h3l1 1 1-1h3M24 4v13M20 18h3l1-1 1 1h3M22 11h4" fill="none" stroke="#333" stroke-width="1.300" /></svg>
          </div>
          <div class="hscroll"></div>
          <div class="status">
            {@render t('Page 1 of 1', 51)}{@render t('88 words', 43)}<span class="g1">{@render ic('book', 13, 11)}</span>{@render t('English (Mexico)', 78)}<span class="g2">{@render ic('access', 12)}</span>{@render t('Accessibility: Investigate', 115)}
            <div class="sright">
              {@render ic('focus', 12)}{@render t('Focus', 28)}
              <span class="view on">{@render ic('just', 12)}</span><span class="view">{@render ic('web', 12)}</span><span class="view">{@render ic('outl', 12)}</span><span class="view">{@render ic('left', 12)}</span>
              <span class="sl"><b>−</b><i class="line"><i></i></i><b>+</b></span>{@render t('273%', 26)}
            </div>
          </div>

          <div class="toast">
            <strong>{@render t('Cris To Todos', 101)}</strong>
            <span>{@render t('Ye', 18)}</span>
            <i class="tick"></i>
            <span class="tx">{@render ic('x', 19, 18)}</span>
          </div>
        </div>

        <div class="handlecol"><i></i></div>
        <div class="people">
          <span class="upc">{@render ic('up', 28, 20)}</span>
          {#each people as p}
            <div class="tile">
              <strong>{@render t(p.name, p.big)}</strong>
              <span class="tag"><span class="mo">{@render ic('micOff', 17, 18)}</span>{@render t(p.name, p.small)}</span>
            </div>
          {/each}
        </div>
      </div>

      <div class="zfoot">
        <div class="fb mic"><span class="fi">{@render ic('zMic', 28, 32)}</span>{@render t('Cancelar sile...', 93)}<span class="caret">{@render ic('up', 13, 13)}</span></div>
        <div class="fb vid"><span class="fi">{@render ic('zVid', 30, 25)}</span>{@render t('Iniciar el vídeo', 96)}</div>
        <span></span>
        <div class="fb part"><span class="fi">{@render ic('zPart', 25, 24)}<b class="cnt">{@render t('19', 14)}</b></span>{@render t('Participantes', 84)}</div>
        <div class="fb"><span class="fi">{@render ic('zShare', 30, 25)}</span>{@render t('Compartir pantalla', 123)}</div>
        <div class="fb chat"><span class="fi">{@render ic('zChat', 28, 28)}<b class="badge">7</b></span>{@render t('Chat', 30)}<span class="caret">{@render ic('up', 13, 13)}</span></div>
        <div class="fb"><span class="fi">{@render ic('zRec', 28, 28)}</span>{@render t('Grabar', 45)}</div>
        <div class="fb ccb"><span class="fi"><b class="cc">{@render t('CC', 19)}</b></span>{@render t('Mostrar subtítulos', 121)}<span class="caret">{@render ic('up', 13, 13)}</span></div>
        <div class="fb"><span class="fi">{@render ic('zHeart', 30, 27)}</span>{@render t('Reacciones', 73)}</div>
        <div class="fb"><span class="fi">{@render ic('zGear', 25, 25)}</span>{@render t('Configuración', 93)}</div>
        <div class="fb"><span class="fi">{@render ic('zMore', 30, 30)}</span>{@render t('Más', 27)}</div>
        <span></span>
        <div class="fb exit"><span class="fi">{@render ic('zExit', 31, 32)}</span>{@render t('Salir', 28)}</div>
      </div>
    </div>

    <aside>
      {#each sidebar as n}<span class="sb">{@render ic(n, 20, 19)}</span>{/each}
      <hr />
      <span class="sp">{@render ic('plus', 15)}</span>
      <hr class="low" />
      <span class="sg">{@render ic('cog', 23)}</span>
    </aside>
  </div>

  <footer>
    <div class="weather">
      <span class="sun"><b>1</b></span>
      <div><span>{@render t('23°C', 31)}</span><span class="g">{@render t('Soleado', 55)}</span></div>
    </div>
    <span class="slot">{@render ic('start', 29)}</span>
    <div class="find">{@render ic('search', 20)}{@render t('Buscar', 50)}<span class="cr">{@render ic('coral', 54, 36)}</span></div>
    <span class="slot">{@render ic('task', 30, 28)}</span>
    <span class="slot run">{@render ic('edge', 30)}</span>
    <span class="slot run">{@render ic('folder', 30, 28)}</span>
    <span class="slot">{@render ic('store', 29, 30)}</span>
    <span class="slot">{@render ic('code', 30, 29)}</span>
    <span class="slot run"></span>
    <div class="tray">
      <span>{@render ic('up', 17, 15)}</span><span>{@render ic('cloud', 21, 15)}</span><span class="bm2">{@render ic('mic', 19, 21)}</span><span>{@render ic('wifi', 20, 19)}</span><span>{@render ic('vol', 19, 18)}</span><span>{@render ic('batt', 22, 19)}</span>
      <div class="clock"><span>{@render t('08:37 a. m.', 72)}</span><span>{@render t('01/06/2024', 78)}</span></div>
      <span>{@render ic('bell', 18, 20)}</span><span class="pre">{@render ic('copilotPre', 29, 29)}<b>PRE</b></span>
    </div>
  </footer>
</div>

<style>
  :global(body) { margin: 0; overflow: hidden; }
  .screen { width: 1920px; height: 1080px; display: flex; flex-direction: column; background: #f7f7f7; font-family: "Open Sans", "Noto Sans", sans-serif; color: #222; overflow: hidden; line-height: 1; }
  .screen :global(*) { box-sizing: border-box; }
  .ic { display: block; flex: none; overflow: visible; }
  .fit { display: inline-block; width: max-content; white-space: pre; transform-origin: 0 50%; flex: none; }
  .cell { display: grid; place-items: center; }
  .chev { display: grid; place-items: center; width: 10px; color: #444; flex: none; }

  .tabstrip { height: 40px; flex: none; background: #e8e8e8; display: flex; align-items: center; font-size: 15px; color: #3a3a3a; }
  .avatar { width: 30px; height: 30px; border-radius: 50%; margin-left: 13px; background: linear-gradient(#6fb0e2 45%, #82b2d4 60%, #2d5f9c); display: grid; place-items: end center; padding-bottom: 5px; }
  .avatar i { width: 12px; height: 9px; border-radius: 50%; background: radial-gradient(circle at 60% 60%, #e8a23a 25%, #fff 40%); }
  .tabstrip .cell { width: 52px; margin-left: 8px; }
  .tabstrip .cell + .cell { margin-left: 1px; }
  .bar { width: 1px; height: 25px; background: #888; margin-left: 7px; }
  .tab { display: flex; align-items: center; height: 40px; flex: none; position: relative; }
  .t1 { width: 298px; padding-left: 14px; }
  .t2 { width: 300px; padding-left: 13px; background: #f7f7f7; border-radius: 9px 9px 0 0; }
  .t3 { width: 298px; padding-left: 13px; border-right: 1px solid #888; border-image: linear-gradient(transparent 20%, #888 20% 82%, transparent 82%) 1; }
  .t4 { width: 300px; padding-left: 14px; border-right: 1px solid #888; border-image: linear-gradient(transparent 20%, #888 20% 82%, transparent 82%) 1; }
  .fav { position: relative; width: 20px; }
  .fav b { position: absolute; inset: 0; display: grid; place-items: center; color: #fff; font-size: 10px; letter-spacing: -.5px; padding-bottom: 2px; }
  .fav b.p { font-size: 7px; padding: 2px 0 0; letter-spacing: 0; }
  .recicon { margin-left: 13px; }
  .ttl { width: 218px; margin-left: 12px; overflow: hidden; padding: 3px 0 5px; }
  .t2 .ttl { width: 186px; margin-left: 12px; }
  .ttl.fade { mask-image: linear-gradient(90deg, #000 88%, transparent); }
  .cls { margin-left: auto; margin-right: 11px; color: #222; }
  .newtab { margin-left: 17px; color: #444; }
  .winctl { margin-left: auto; display: flex; gap: 38px; padding-right: 18px; color: #888; align-items: center; }
  .wx { color: #888; }

  .toolbar { height: 48px; flex: none; display: flex; align-items: center; background: #f7f7f7; padding-bottom: 1px; }
  .toolbar > .cell { width: 56px; margin-left: 0; }
  .toolbar > .cell:first-child { margin-left: 6px; }
  .dark { color: #222; }
  .address { width: 1343px; height: 37px; margin-left: 6px; border-radius: 19px; background: #fff; display: flex; align-items: center; padding-left: 22px; box-shadow: 0 0 3px #0002; }
  .url { margin-left: 20px; font-size: 17px; color: #737373; padding-bottom: 1px; }
  .url b { font-weight: 400; color: #000; }
  .aicons { display: flex; margin-left: auto; width: 156px; color: #666; }
  .aicons span { width: 50px; display: grid; place-items: center; }
  .toolbar > .c1 { width: 40px; margin-left: 16px; }
  .vb { width: 2px; height: 20px; background: #ccc; margin-left: 10px; }
  .right { display: flex; }
  .right .cell { width: 55.300px; }
  .cop { margin-left: auto; margin-right: 12px; }

  .body { height: 932px; flex: none; display: flex; padding-left: 5px; }
  .zoom { width: 1860px; height: 928px; background: #060808; border-radius: 9px; overflow: hidden; display: flex; flex-direction: column; color: #fff; }
  .zhead { height: 60px; flex: none; display: flex; align-items: center; }
  .logo { width: 767px; padding-left: 31px; display: flex; flex-direction: column; font-family: Lato, sans-serif; padding-bottom: 3px; }
  .z1 { font-size: 18px; line-height: 12px; font-weight: 700; }
  .z2 { font-size: 18px; line-height: 20px; font-weight: 500; font-family: Inter, sans-serif; margin-top: 3px; }
  .ghost { width: 300px; padding-left: 31px; filter: blur(3px); color: #4c4c4c; font-size: 14px; font-weight: 600; }
  .zright { margin-left: auto; display: flex; align-items: center; padding-right: 31px; }
  .zright > .ic:last-child { margin-left: 13px; }
  .recpill { width: 60px; height: 28px; border-radius: 7px; background: #000; display: flex; align-items: center; margin-left: 10px; padding-left: 11px; font-size: 13px; color: #999; font-weight: 600; }
  .recpill i { width: 8px; height: 8px; border-radius: 50%; background: #fb5252; margin-right: 7px; }
  .zbar { width: 1px; height: 28px; background: #ddd; margin-left: 15px; }
  .ver { display: flex; align-items: center; gap: 6px; margin-left: 33px; margin-right: 21px; font-size: 15px; }

  .zmain { height: 803px; flex: none; display: flex; background: #121619; }
  .share { width: 1518px; flex: none; height: 803px; border: 3px solid #4ac602; border-top-width: 2px; border-bottom: 0; background: #f2f2f2; color: #333; position: relative; display: flex; flex-direction: column; font-family: Inter, Roboto, sans-serif; overflow: hidden; }
  .banner { position: absolute; left: 378px; top: -2px; height: 31px; display: flex; font-family: "Open Sans", sans-serif; font-weight: 700; font-size: 15px; z-index: 3; border-radius: 0 0 6px 6px; overflow: hidden; }
  .ban1 { width: 600px; background: #23d959; color: #212c26; display: flex; align-items: center; padding-left: 30px; gap: 6px; padding-top: 1px; }
  .bm { margin-left: 6px; margin-right: 5px; color: #16613a; --cut: #23d959; }
  .ban2 { width: 156px; background: #232528; color: #fff; display: flex; align-items: center; gap: 6px; padding-left: 18px; padding-top: 1px; }
  .bd { margin-top: -5px; }

  .wtitle { height: 21px; flex: none; display: flex; align-items: center; padding-left: 8px; font-size: 10.500px; color: #555; }
  .pill { width: 43px; height: 16px; border-radius: 9px; background: #dcdcdc; border: 1px solid #ccc; display: grid; place-items: center; }
  .auto { margin-left: 22px; }
  .toggle { width: 24px; height: 12px; border-radius: 6px; background: #888; margin-left: 7px; padding: 1px; }
  .toggle i { display: block; width: 11px; height: 10px; border-radius: 5px; background: #fff; }
  .quick { display: flex; margin-left: 4px; }
  .q { display: grid; place-items: center; width: 23px; flex: none; }
  .qc { width: 9px; margin-right: 1px; }
  .q2 { width: 22.500px; }
  .wsearch { margin-left: auto; width: 231px; height: 18px; border: 1px solid #e4e4e4; border-radius: 4px; display: flex; align-items: center; gap: 7px; padding-left: 4px; color: #777; font-weight: 500; margin-top: 2px; }
  .ppl { width: 33px; display: grid; place-items: center; padding-left: 4px; }

  .wmenu { height: 29px; flex: none; display: flex; align-items: center; gap: 19.900px; padding: 2px 0 0 6px; font-size: 11.300px; font-weight: 500; }
  .wm { height: 23px; display: grid; place-items: center; border-bottom: 3px solid transparent; padding-top: 2px; }
  .wm.on { border-color: #2b579a; color: #111; font-weight: 700; margin-right: -1.500px; }
  .wbtns { display: flex; gap: 8px; margin-left: auto; padding-right: 5px; }
  .wb { height: 20px; border-radius: 5px; background: #fff; box-shadow: 0 0 1px #999; display: flex; align-items: center; gap: 5px; padding-left: 7px; width: 86px; }
  .wb.ed { width: 78px; }
  .wb.sharebtn { width: 73px; background: #0b4fb0; color: #fff; font-weight: 700; padding-left: 8px; }
  .sharebtn .chev { color: #fff; }

  .ribbon { height: 60px; flex: none; display: flex; font-size: 10px; padding-top: 3px; }
  .grp { height: 52px; border-right: 1px solid #d4d4d4; flex: none; }
  .clip { width: 75px; display: flex; padding-left: 10px; }
  .pasteb { width: 36px; display: flex; flex-direction: column; gap: 3px; padding-top: 2px; }
  .pasteb > :global(.fit) { margin-left: 4px; }
  .pi { display: flex; align-items: center; }
  .clipcol { display: flex; flex-direction: column; align-items: center; gap: 4px; padding-top: 2px; width: 20px; }
  .font { width: 267px; }
  .fr1 { height: 27px; display: grid; grid-template-columns: 81px 46px 26px 20px 13px 34px 6px 26px; align-items: center; justify-items: center; padding-left: 8px; }
  .fr1 .box:nth-child(2) { margin-left: 0; width: 42px; }
  .box { height: 18px; width: 81px; background: #fff; border: 1px solid #ccc; border-radius: 2px; display: flex; align-items: center; justify-content: space-between; padding: 0 1px 0 4px; font-weight: 500; font-size: 10.500px; }
  .big { font-size: 14px; display: flex; color: #555; }
  .big sup { font-size: 11px; line-height: 8px; color: #2a79bd; }
  .big.sm { font-size: 12px; }
  .sep { width: 1px; height: 16px; background: #ccc; display: block; }
  .aa { display: flex; align-items: center; font-size: 11px; gap: 3px; letter-spacing: -.3px; }
  .fr2 { height: 28px; display: grid; grid-template-columns: 20px 22px 20px 10px 24px 22px 22px 10px 32px 32px 32px; align-items: center; justify-items: center; padding-left: 8px; font-size: 11.500px; }
  .fr2 b { font-weight: 600; }
  .fr2 em { font-family: "Liberation Serif", serif; font-size: 14px; }
  .fr2 s { font-size: 11px; color: #555; }
  .fr2 sub, .fr2 sup { font-size: 7px; color: #2a79bd; line-height: 0; }
  .pair { width: 31.500px; display: flex; align-items: center; flex: none; }
  .pair > :first-child { width: 21.500px; display: grid; place-items: center; }
  .outl { font-size: 15px; font-weight: 800; color: #2a79bd; }
  .red { font-size: 12px; }
  .red::after { content: ""; width: 14px; height: 3px; background: #c4402d; }
  .para { width: 234px; }
  .pr1, .pr2 { height: 27px; display: flex; align-items: center; padding-left: 7px; }
  .pr2 { padding-left: 8px; }
  .pr1 .sep { margin: 0 6px 0 6px; }
  .pr1 .s3 { margin: 0 6px; }
  .w21 { width: 21px; display: grid; place-items: center; flex: none; }
  .pil { font-size: 13px; font-weight: 700; }
  .al { width: 19px; height: 20px; display: grid; place-items: center; margin-right: 2.300px; flex: none; }
  .al.on { background: #bdbdbd; border-radius: 2px; }
  .pr2 .sep { margin: 0 5px 0 7px; }
  .pr2 .s2 { margin: 0 7px 0 4px; }
  .pr2 .s2 ~ .pair { width: 30.500px; }
  .gallery { margin-left: 9px; width: 628px; height: 49px; background: #fff; border: 1px solid #d0d0d0; border-radius: 2px; display: flex; align-items: center; gap: 8.500px; padding-left: 17px; flex: none; margin-top: -1px; }
  .card { width: 58px; height: 38px; border: 1px solid #d6d6d6; border-radius: 3px; display: flex; flex-direction: column; overflow: hidden; flex: none; }
  .sample { height: 25px; line-height: 25px; padding-left: 2px; width: 55px; overflow: hidden; white-space: nowrap; font-size: 9.800px; color: #222; font-weight: 500; letter-spacing: -.3px; }
  .s1 { font-size: 14.500px; color: #1d4e66; }
  .s2 { font-size: 12.500px; color: #1d4e66; }
  .tt { font-size: 19px; color: #000; }
  .st { font-size: 11px; color: #777; font-weight: 400; }
  .se { font-style: italic; color: #555; }
  .em { font-style: italic; }
  .ie { font-style: italic; color: #1d5068; }
  .cap { flex: 1; background: #f1f1f1; display: grid; place-items: center; font-size: 8.500px; font-weight: 500; }
  .more { font-size: 12px; margin-left: 0; }
  .bigb { display: flex; flex-direction: column; align-items: center; height: 52px; flex: none; border-right: 1px solid #d4d4d4; font-size: 10px; font-weight: 500; padding-top: 3px; line-height: 10px; }
  .bigb > span:first-child { display: flex; align-items: center; margin-bottom: 5px; }
  .b1 { width: 40px; padding-right: 8px; }
  .b2 { width: 51px; }
  .b3 { width: 65px; color: #aaa; }
  .b4 { width: 54px; }
  .b5 { width: 46px; border: 0; }

  .ruler { height: 19px; flex: none; border-top: 1px solid #c8c8c8; display: flex; }
  .corner { width: 15px; font-size: 8px; }
  .track { position: relative; margin-left: -15px; width: 1512px; height: 14px; border-bottom: 1px solid #ddd; background: linear-gradient(90deg, #fff 63px, #d9d9d9 63px 227px, #fdfdfd 227px 1287px, #d9d9d9 1287px 1451px, #fff 1451px); }
  .nums { width: 1388px; margin-left: 63px; height: 13px; display: flex; overflow: hidden; padding-left: 3px; font-size: 8px; color: #777; background: repeating-linear-gradient(90deg, #aaa 0 1px, transparent 1px 32.120px) 3px 100% / 100% 7px no-repeat, repeating-linear-gradient(90deg, transparent 0 16px, #aaa 16px 17px, transparent 17px 32.120px) 3px 100% / 100% 3px no-repeat; }
  .nums span { width: 64.250px; flex: none; text-align: center; }
  .mk { position: absolute; top: 0; }
  .m1 { left: 303px; }
  .m2 { left: 1282px; top: 5px; }

  .canvas { height: 646px; flex: none; display: flex; background: #e9e8ea; position: relative; }
  .vruler { width: 14px; background: repeating-linear-gradient(#f7f7f7 0 31px, #bbb 31px 32px) 3px 0 / 7px 100% no-repeat, #f4f4f4; }
  .page { margin-left: 51px; width: 1388px; height: 646px; background: #fefdfe; box-shadow: -1px 0 1px #ccc; padding: 7.800px 0 0 163px; color: #111; font-family: Roboto, sans-serif; font-size: 25px; line-height: 33.400px; }
  h1 { margin: 0; font: inherit; font-weight: 700; color: #000; -webkit-text-stroke: .3px #000; }
  .list { margin-top: 33.400px; padding-left: 41px; display: grid; grid-template-columns: 41px 1fr; font-weight: 400; -webkit-text-stroke: .45px currentColor; }
  .list p { margin: 0; height: 33.400px; white-space: nowrap; display: flex; }
  .list p i { width: 7.500px; }
  .list em { font-style: normal; display: flex; align-items: center; }
  .arrow { margin: 0 7px; }
  .green { color: #2f7238; }
  .blue { color: #36a0d2; }
  .rust { color: #bd4630; }
  .diagram { margin: 51.600px 0 0 299px; }
  .srow { display: flex; align-items: center; }
  .sign { width: 54px; display: grid; place-items: center start; padding-top: 3px; }
  .sbox { width: 519px; border-radius: 21px; background: #6f97c5; display: grid; grid-template-rows: 39px 24px; justify-items: center; font-weight: 700; height: 71px; }
  .rule { color: #eaff4d; font-size: 25px; line-height: 42px; font-weight: 700; padding-left: 13px; }
  .ex { color: #0a0c12; font-size: 20px; line-height: 27px; padding-right: 15px; }
  .b { margin-top: 20.500px; }
  .b svg { width: 36px; height: 36px; }
  .b .rule { padding-left: 20px; }
  .b .ex { line-height: 29px; }
  .b .sbox { height: 72px; }
  .c { margin-top: 21.500px; }
  .c .rule { line-height: 43px; padding-left: 17px; }
  .c .sbox { height: 69px; }
  .scroll { margin-left: auto; width: 8px; background: #f8f8f8; padding-top: 278px; }
  .scroll i { display: block; width: 7px; height: 222px; border-radius: 4px; background: #777; margin-left: 1px; }
  .laser { position: absolute; left: 1134px; top: 612px; }
  .hscroll { height: 12px; flex: none; background: #f9f9f9; }
  .status { height: 21px; flex: none; margin-bottom: -8px; border-top: 1px solid #b5b5b5; background: #dadada; display: flex; align-items: center; padding-left: 17px; font-size: 10.500px; color: #666; gap: 16.200px; white-space: nowrap; }
  .g1 { margin-left: -1px; }
  .g2 { margin-right: -14px; }
  .sright { display: flex; align-items: center; margin-left: auto; padding-right: 18px; height: 100%; }
  .sright > :global(.fit:nth-child(2)) { margin-left: 6px; }
  .view { width: 30px; height: 100%; display: grid; place-items: center; }
  .view.on { background: #aaa; margin-left: 9px; }
  .sl { display: flex; align-items: center; font-size: 14px; gap: 5px; margin: 0 14px 0 5px; }
  .line { width: 82px; height: 3px; background: #999; display: grid; align-items: center; }
  .line i { width: 13px; height: 14px; border-radius: 50%; background: #fff; margin-left: 49px; }

  .toast { position: absolute; left: 670px; top: 707px; width: 330px; height: 88px; border-radius: 7px; background: #404040; color: #fff; padding: 19px 13px; font-family: "Open Sans", sans-serif; font-size: 15px; display: flex; flex-direction: column; gap: 7px; }
  .toast > span { font-size: 16px; }
  .tx { position: absolute; right: 10px; top: 8px; color: #8a8a98; }
  .tick { position: absolute; left: 131px; top: 63px; width: 1px; height: 6px; background: #111; }

  .handlecol { width: 20px; display: flex; align-items: center; padding-left: 5px; height: 808px; }
  .handlecol i { width: 5px; height: 50px; border-radius: 3px; background: #ccc; }
  .people { width: 292px; margin-left: 20px; display: flex; flex-direction: column; }
  .upc { height: 153px; display: grid; place-items: center; padding-top: 73px; }
  .tile { height: 165px; background: #1a1a1a; margin-bottom: 4px; display: flex; flex-direction: column; align-items: center; flex: none; }
  .tile:last-child { margin-top: 1px; }
  .tile strong { font-size: 19px; margin-top: 73px; line-height: 20px; font-weight: 700; }
  .tag { align-self: flex-start; margin: 38px 0 0 5px; height: 28px; border-radius: 5px; background: #0c0c0c; display: flex; align-items: center; padding: 0 7px 0 2px; gap: 4px; font-size: 14.500px; }
  .mo { color: #f25a5a; --cut: #0c0c0c; }

  .zfoot { height: 65px; flex: none; display: grid; grid-template-columns: 122px 106px 298px 105px 161px 92px 108px 144px 108px 118px 106px 292px 100px; background: linear-gradient(#1d2a18, #060808 14px); font-size: 15px; }
  .fb { position: relative; display: flex; flex-direction: column; align-items: center; }
  .fi { height: 38px; display: grid; place-items: center; position: relative; margin-bottom: 3px; }
  .mic .fi, .vid .fi { left: -6px; }
  .chat .fi { left: -1px; }
  .cnt { position: absolute; left: 27px; top: 6px; font-weight: 400; color: #ccc; }
  .badge { position: absolute; left: 19px; top: 2px; width: 16px; height: 17px; border-radius: 4px; background: #e02828; display: grid; place-items: center; font-size: 13px; font-weight: 400; }
  .cc { width: 30px; height: 23px; border: 1.500px solid #fff; border-radius: 5px; display: grid; place-items: center; font-size: 13px; font-family: Inter, sans-serif; }
  .caret { position: absolute; top: 9px; right: 15px; color: #888; }
  .chat .caret { right: 2px; }
  .ccb .caret { right: 3px; }

  aside { width: 55px; display: flex; flex-direction: column; align-items: center; padding: 2px 1px 0 0; }
  .sb { height: 50.200px; display: grid; place-items: center; }
  hr { width: 35px; border: 0; border-top: 2px solid #ccc; margin: 15px 0 0; }
  .sp { margin-top: 31px; color: #555; }
  .low { margin-top: 460px; }
  .sg { margin-top: 15px; }

  footer { height: 60px; flex: none; border-top: 1px solid #aeb6c0; display: flex; align-items: center; background: linear-gradient(90deg, #e3eef7 0 20%, #d3e2f9 27%, #d8dcf5 33%, #d4dff8 45%, #d5dbf3 55%, #d4defa 64%, #d8dcf1 72%, #e0eaf7 78%, #e2eef9); font-size: 15px; }
  .weather { width: 627px; display: flex; padding-left: 28px; }
  .sun { width: 24px; height: 24px; border-radius: 50%; background: linear-gradient(135deg, #f5c13e, #f2670c); position: relative; margin-top: 5px; }
  .sun b { position: absolute; left: 11px; top: -11px; width: 20px; height: 20px; border-radius: 50%; background: #c42b1c; color: #fff; display: grid; place-items: center; font-weight: 400; font-size: 13px; }
  .weather div { display: flex; flex-direction: column; margin: -2px 0 0 13px; gap: 5px; }
  .g { color: #555; }
  .slot { width: 55px; height: 59px; display: grid; place-items: center; position: relative; flex: none; }
  .run::after { content: ""; position: absolute; left: 24px; bottom: 6px; width: 8px; height: 4px; border-radius: 2px; background: #6f7784; }
  .find { width: 273px; height: 38px; border-radius: 20px; background: #f3f6fd; border: 1px solid #c3cbe2; display: flex; align-items: center; gap: 13px; padding-left: 12px; margin: 0 3px 0 5px; color: #555; flex: none; }
  .find > :global(.ic) { color: #222; }
  .cr { margin-left: auto; margin-right: 8px; }
  .tray { margin-left: auto; margin-right: 12px; display: grid; grid-template-columns: 40px 40px 40px 40px 18px 44px 86px 38px 54px; align-items: center; justify-items: center; }
  .bm2 { color: #1356a8; }
  .clock { justify-self: end; display: flex; flex-direction: column; align-items: flex-end; gap: 5px; margin-top: -2px; }
  .pre { position: relative; }
  .pre b { position: absolute; left: 6px; bottom: 1px; width: 23px; text-align: center; font-size: 9px; }
</style>
